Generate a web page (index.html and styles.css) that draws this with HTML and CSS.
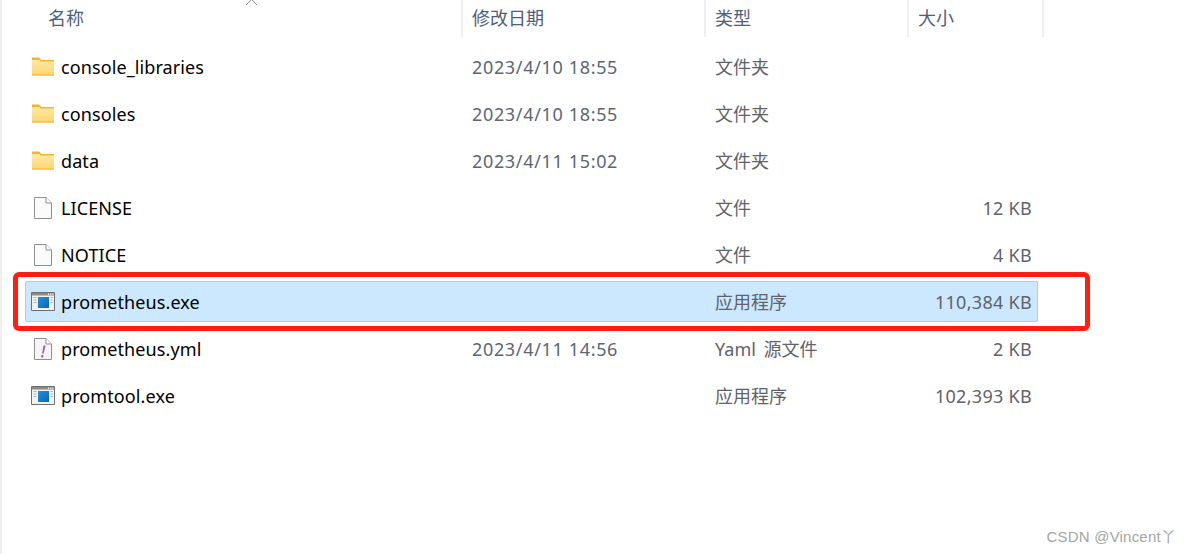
FILE: index.html
```html
<!DOCTYPE html>
<html lang="zh-CN">
<head>
<meta charset="utf-8">
<title>prometheus</title>
<link rel="stylesheet" href="styles.css">
</head>
<body>
<svg class="defs" width="0" height="0" aria-hidden="true">
  <defs>
    <linearGradient id="fg" x1="0" y1="0" x2="0" y2="1"><stop offset="0" stop-color="#ffe9a8"/><stop offset="1" stop-color="#fdd56e"/></linearGradient>
    <linearGradient id="bg" x1="0" y1="0" x2="1" y2="1"><stop offset="0" stop-color="#1f92e0"/><stop offset="1" stop-color="#0a67b8"/></linearGradient>
    <symbol id="folder" viewBox="0 0 24 24">
      <path d="M1 2.500h7l2 2v2H1z" fill="#f5b51f"/>
      <path d="M1 5h22v15.500H1z" fill="url(#fg)"/>
      <path d="M9 5h14v1.500H9z" fill="#f2b632"/>
      <path d="M1 19.500h22v1H1z" fill="#eeb02e"/>
    </symbol>
    <symbol id="file" viewBox="0 0 24 24">
      <path d="M3.500 1.500h11.500l5.500 5.500v15.500H3.500z" fill="#fbfbfb" stroke="#8f8f8f"/>
      <path d="M15 1.500v5.500h5.500" fill="#fff" stroke="#8f8f8f"/>
    </symbol>
    <symbol id="yml" viewBox="0 0 24 24">
      <path d="M3.500 1.500h11.500l5.500 5.500v15.500H3.500z" fill="#f6f4f8" stroke="#8f8f8f"/>
      <path d="M15 1.500v5.500h5.500" fill="#fff" stroke="#8f8f8f"/>
      <path d="M12.500 8.500h2.200l-2 8h-1.600z" fill="#9a62bd"/>
      <path d="M10.500 18h2l-.4 2.500h-2z" fill="#9a62bd"/>
    </symbol>
    <symbol id="exe" viewBox="0 0 24 20">
      <path d="M.5.500h23v18H.5z" fill="#f2f2f2" stroke="#6f6f6f"/>
      <path d="M1 1h22v2.500H1z" fill="#8a8a8a"/>
      <path d="M17 1.500h1.200v1.200H17zM19.200 1.500h1.200v1.200h-1.200zM21.300 1.500h1.200v1.200h-1.200z" fill="#fff"/>
      <path d="M7 5h11v11H7z" fill="url(#bg)"/>
      <path d="M2.500 5.500h3M2.500 8h3M2.500 10.500h3M19.500 5.500h2.500M19.500 8h2.500M19.500 10.500h2.500" stroke="#b5b5b5" stroke-width="1"/>
    </symbol>
  </defs>
</svg>
<main class="explorer">
  <header class="head">
    <div class="hcell hname">名称<svg class="sort" width="13" height="5" viewBox="0 0 13 5"><path d="M1 5l5.500-5.500L12 5" fill="none" stroke="#8a8f96" stroke-width="1"/></svg></div>
    <div class="hcell">修改日期</div>
    <div class="hcell">类型</div>
    <div class="hcell">大小</div>
  </header>
  <div class="list">
    <div class="row"><span class="name"><svg class="ico"><use href="#folder"/></svg>console_libraries</span><span class="date">2023/4/10 18:55</span><span class="type">文件夹</span><span class="size"></span></div>
    <div class="row"><span class="name"><svg class="ico"><use href="#folder"/></svg>consoles</span><span class="date">2023/4/10 18:55</span><span class="type">文件夹</span><span class="size"></span></div>
    <div class="row"><span class="name"><svg class="ico"><use href="#folder"/></svg>data</span><span class="date">2023/4/11 15:02</span><span class="type">文件夹</span><span class="size"></span></div>
    <div class="row"><span class="name"><svg class="ico"><use href="#file"/></svg>LICENSE</span><span class="date"></span><span class="type">文件</span><span class="size">12 KB</span></div>
    <div class="row"><span class="name"><svg class="ico"><use href="#file"/></svg>NOTICE</span><span class="date"></span><span class="type">文件</span><span class="size">4 KB</span></div>
    <div class="row selected"><span class="name"><svg class="ico"><use href="#exe"/></svg>prometheus.exe</span><span class="date"></span><span class="type">应用程序</span><span class="size">110,384 KB</span><div class="mark"></div></div>
    <div class="row"><span class="name"><svg class="ico"><use href="#yml"/></svg>prometheus.yml</span><span class="date">2023/4/11 14:56</span><span class="type wide">Yaml 源文件</span><span class="size">2 KB</span></div>
    <div class="row"><span class="name"><svg class="ico"><use href="#exe"/></svg>promtool.exe</span><span class="date"></span><span class="type">应用程序</span><span class="size">102,393 KB</span></div>
  </div>
</main>
<div class="watermark">CSDN @Vincent丫</div>
</body>
</html>
```
FILE: styles.css
```css
* { box-sizing: border-box; }
html, body { margin: 0; height: 100%; background: #fff; overflow: hidden; }
body {
  position: relative;
  border-left: 2px solid #f0f0f0;
  font-family: "Noto Sans", "Noto Sans CJK SC", sans-serif;
  font-size: 18px;
  color: #000;
}
.defs { display: block; height: 0; }
.explorer { width: 1042px; }
.head {
  display: grid;
  grid-template-columns: 461px 243px 203px 135px;
  height: 37px;
}
.hcell {
  position: relative;
  padding: 6px 0 0 9px;
  line-height: 24px;
  color: #4c607a;
  border-right: 2px solid #f0f0f0;
}
.hname { padding-left: 46px; }
.sort { position: absolute; left: 243px; top: 0; }
.list {
  display: flex;
  flex-direction: column;
  gap: 6px;
  margin: 9px 0 0 23px;
  width: 1013px;
}
.row {
  position: relative;
  display: grid;
  grid-template-columns: 437px 243px 203px 123px;
  height: 41px;
  align-items: center;
  line-height: 24px;
  border: 1px solid transparent;
  border-radius: 2px;
}
.selected { background: #cce8ff; border-color: #99d1ff; }
.name { display: flex; align-items: center; white-space: nowrap; position: relative; padding-left: 35px; letter-spacing: .1px; }
.ico { position: absolute; left: 5px; top: 0; width: 24px; height: 24px; }
.date, .type, .size { color: #5f6368; white-space: nowrap; }
.date { color: #5c6673; padding-left: 9px; letter-spacing: .66px; }
.type { padding-left: 9px; }
.wide { word-spacing: 3px; }
.size { text-align: right; letter-spacing: .3px; }
.mark {
  position: absolute;
  left: -13px;
  top: -10px;
  width: 1077px;
  height: 59px;
  border: 5px solid #ff1e10;
  border-radius: 6px;
  pointer-events: none;
}
.watermark {
  position: absolute;
  right: 13px;
  top: 527px;
  font-family: "Liberation Sans", "Noto Sans CJK SC", sans-serif;
  font-size: 15px;
  line-height: 20px;
  letter-spacing: .2px;
  color: #a5a5a5;
}
```
